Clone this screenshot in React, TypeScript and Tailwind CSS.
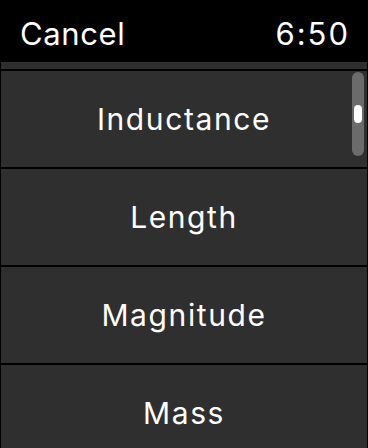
const ITEMS = ['Inductance', 'Length', 'Magnitude', 'Mass'];

export default function App() {
  return (
    <div
      className="relative w-[368px] h-[448px] overflow-hidden bg-black text-white"
      style={{ fontFamily: 'Inter, "Noto Sans", sans-serif' }}
    >
      {/* status header */}
      <div className="flex h-[62px] items-center justify-between px-[20px] pt-[4px] text-[31px] leading-none">
        <span className="tracking-[0.6px]">Cancel</span>
        <span className="tracking-[2px] -mr-[2px]">6:50</span>
      </div>

      {/* picker list */}
      <div className="flex flex-col gap-[2px] px-[1px]">
        <div className="h-[7px] bg-[#2f2f2f]" />
        {ITEMS.map((item) => (
          <div
            key={item}
            className="flex h-[96px] items-center justify-center bg-[#2f2f2f] text-[30px] tracking-[1.6px]"
          >
            {item}
          </div>
        ))}
      </div>

      {/* scroll indicator */}
      <div className="absolute left-[352px] top-[72px] flex h-[84px] w-[12px] items-center justify-center rounded-full bg-[#6b6b6b]">
        <div className="h-[18px] w-[8px] rounded-full bg-white" />
      </div>
    </div>
  );
}
